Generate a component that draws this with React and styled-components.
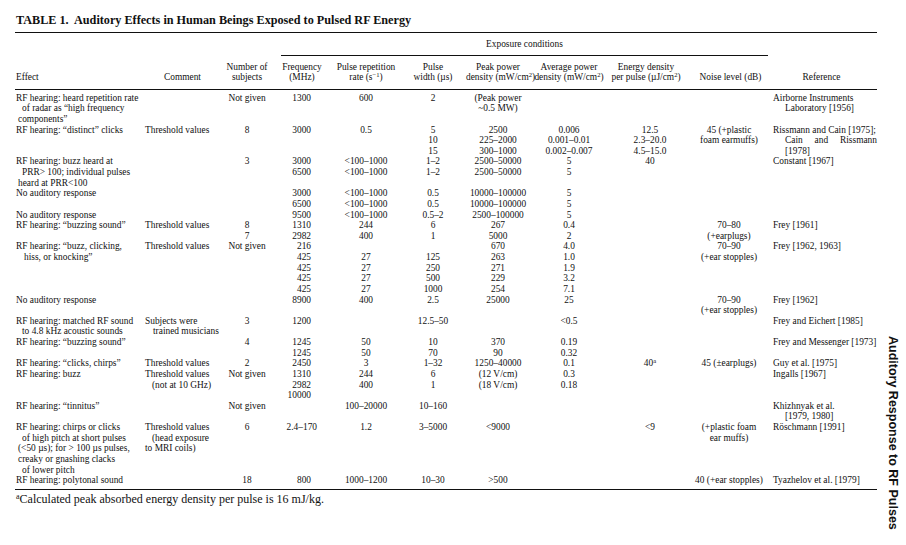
import React from "react";
import styled, { createGlobalStyle } from "styled-components";

const GlobalStyle = createGlobalStyle`
  html, body { margin: 0; padding: 0; background: #fff; }
  body {
    font-family: "Liberation Serif", "Times New Roman", serif;
    color: #111;
  }
`;

const COLS = "128px 79px 50px 60px 68px 66px 64px 78px 84px 74px 111px";

const Page = styled.div`
  display: flex;
  width: 906px;
  height: 545px;
  overflow: hidden;
`;

const Main = styled.div`
  width: 862px;
  flex-shrink: 0;
  padding: 13px 0 0 15px;
`;

const Title = styled.h1`
  margin: 0;
  padding-left: 1px;
  font-size: 12.2px;
  line-height: 14px;
  font-weight: bold;
  white-space: pre;
`;

const Table = styled.div`
  margin-top: 5px;
  border-top: 1px solid #111;
  border-bottom: 1px solid #111;
  font-size: 9.4px;
  line-height: 10.64px;
`;

const Grid = styled.div`
  display: grid;
  grid-template-columns: ${COLS};
`;

const HeadTop = styled(Grid)`
  padding-top: 5.7px;
`;

const SpanHead = styled.div`
  grid-column: 4 / 11;
  margin: 0 -2px 0 9px;
  padding-bottom: 5.7px;
  border-bottom: 1px solid #111;
  text-align: center;
`;

const HeadRow = styled(Grid)`
  padding: 5.7px 0 6px;
  border-bottom: 1px solid #111;
`;

const HeadCell = styled.div`
  align-self: end;
  text-align: ${p => p.$align || "center"};
  padding-left: ${p => p.$pl || 0}px;
  margin-left: ${p => p.$shift || 0}px;
  white-space: nowrap;
`;

const Body = styled(Grid)`
  padding: 2.7px 0 3px;
`;

const Cell = styled.div`
  text-align: ${p => p.$align};
  padding-left: ${p => p.$pl || 0}px;
  padding-right: ${p => p.$pr || 0}px;
  white-space: nowrap;
`;

const Line = styled.div`
  height: 10.64px;
  padding-left: ${p => p.$indent || 0}px;
  margin-right: ${p => p.$nudge || 0}px;
`;

const Spread = styled(Line)`
  display: flex;
  justify-content: space-between;
`;

const Sup = styled.sup`
  font-size: 6.6px;
  line-height: 0;
  vertical-align: 3px;
`;

const Note = styled.p`
  margin: 2px 0 0;
  padding-left: 1px;
  font-size: 12px;
  line-height: 14px;
`;

const NoteMark = styled.sup`
  font-size: 8px;
  line-height: 0;
  vertical-align: 4px;
`;

const Side = styled.div`
  flex: 1;
  display: flex;
  flex-direction: column;
  justify-content: flex-end;
  align-items: center;
  padding: 0 0 15px 3px;
`;

const SideTitle = styled.div`
  writing-mode: vertical-rl;
  font-family: "Liberation Sans", Arial, sans-serif;
  font-weight: bold;
  font-size: 12.5px;
  line-height: 14px;
  color: #111;
`;

const L = (t, i) => ({ t, i });

const columns = [
  { key: "e", align: "left", pl: 1 },
  { key: "c", align: "left", pl: 2 },
  { key: "n", align: "center" },
  { key: "f", align: "right", pr: 21 },
  { key: "r", align: "center" },
  { key: "w", align: "center" },
  { key: "p", align: "center" },
  { key: "a", align: "center" },
  { key: "en", align: "center" },
  { key: "no", align: "center" },
  { key: "ref", align: "left", pl: 7 },
];

const cm2 = <>cm<Sup>2</Sup>)</>;

const headers = [
  { lines: ["Effect"], align: "left", pl: 1 },
  { lines: ["Comment"] },
  { lines: ["Number of", "subjects"] },
  { lines: ["Frequency", "(MHz)"] },
  { lines: ["Pulse repetition", <>rate (s<Sup>−1</Sup>)</>] },
  { lines: ["Pulse", "width (µs)"] },
  { lines: ["Peak power", <>density (mW/{cm2}</>] },
  { lines: ["Average power", <>density (mW/{cm2}</>] },
  { lines: ["Energy density", <>per pulse (µJ/{cm2}</>], shift: -8 },
  { lines: ["Noise level (dB)"], shift: 3 },
  { lines: ["Reference"] },
];

const k5 = "<100–1000";

const rows = [
  {
    e: ["RF hearing: heard repetition rate", L("of radar as “high frequency", 6), L("components”", 2)],
    n: ["Not given"], f: ["1300"], r: ["600"], w: ["2"],
    p: ["(Peak power", "~0.5 MW)"],
    ref: ["Airborne Instruments", L("Laboratory [1956]", 12)],
  },
  {
    e: ["RF hearing: “distinct” clicks"], c: ["Threshold values"], n: ["8"], f: ["3000"], r: ["0.5"],
    w: ["5", "10", "15"], p: ["2500", "225–2000", "300–1000"],
    a: ["0.006", "0.001–0.01", "0.002–0.007"], en: ["12.5", "2.3–20.0", "4.5–15.0"],
    no: ["45 (+plastic", "foam earmuffs)"],
    ref: ["Rissmann and Cain [1975];", { spread: ["Cain", "and", "Rissmann"], i: 12 }, L("[1978]", 12)],
  },
  {
    e: ["RF hearing: buzz heard at", L("PRR> 100; individual pulses", 6), L("heard at PRR<100", 2)],
    n: ["3"], f: ["3000", "6500"], r: [k5, k5], w: ["1–2", "1–2"],
    p: ["2500–50000", "2500–50000"], a: ["5", "5"], en: ["40"], ref: ["Constant [1967]"],
  },
  {
    e: ["No auditory response"], f: ["3000", "6500"], r: [k5, k5], w: ["0.5", "0.5"],
    p: ["10000–100000", "10000–100000"], a: ["5", "5"],
  },
  { e: ["No auditory response"], f: ["9500"], r: [k5], w: ["0.5–2"], p: ["2500–100000"], a: ["5"] },
  {
    e: ["RF hearing: “buzzing sound”"], c: ["Threshold values"], n: ["8", "7"], f: ["1310", "2982"],
    r: ["244", "400"], w: ["6", "1"], p: ["267", "5000"], a: ["0.4", "2"],
    no: ["70–80", "(+earplugs)"], ref: ["Frey [1961]"],
  },
  {
    e: ["RF hearing: “buzz, clicking,", L("hiss, or knocking”", 8)], c: ["Threshold values"], n: ["Not given"],
    f: ["216", "425", "425", "425", "425"], r: ["", "27", "27", "27", "27"],
    w: ["", "125", "250", "500", "1000"], p: ["670", "263", "271", "229", "254"],
    a: ["4.0", "1.0", "1.9", "3.2", "7.1"], no: ["70–90", "(+ear stopples)"], ref: ["Frey [1962, 1963]"],
  },
  {
    e: ["No auditory response"], f: ["8900"], r: ["400"], w: ["2.5"], p: ["25000"], a: ["25"],
    no: ["70–90", "(+ear stopples)"], ref: ["Frey [1962]"],
  },
  {
    e: ["RF hearing: matched RF sound", L("to 4.8 kHz acoustic sounds", 6)],
    c: ["Subjects were", L("trained musicians", 8)], n: ["3"], f: ["1200"], w: ["12.5–50"], a: ["<0.5"],
    ref: ["Frey and Eichert [1985]"],
  },
  {
    e: ["RF hearing: “buzzing sound”"], n: ["4"], f: ["1245", "1245"], r: ["50", "50"], w: ["10", "70"],
    p: ["370", "90"], a: ["0.19", "0.32"], ref: ["Frey and Messenger [1973]"],
  },
  {
    e: ["RF hearing: “clicks, chirps”"], c: ["Threshold values"], n: ["2"], f: ["2450"], r: ["3"],
    w: ["1–32"], p: ["1250–40000"], a: ["0.1"], en: [<>40<Sup>a</Sup></>], no: ["45 (±earplugs)"],
    ref: ["Guy et al. [1975]"],
  },
  {
    e: ["RF hearing: buzz"], c: ["Threshold values", L("(not at 10 GHz)", 7)], n: ["Not given"],
    f: ["1310", "2982", "10000"], r: ["244", "400"], w: ["6", "1"], p: ["(12 V/cm)", "(18 V/cm)"],
    a: ["0.3", "0.18"], ref: ["Ingalls [1967]"],
  },
  {
    e: ["RF hearing: “tinnitus”"], n: ["Not given"], r: ["100–20000"], w: ["10–160"],
    ref: ["Khizhnyak et al.", L("[1979, 1980]", 12)],
  },
  {
    e: [
      "RF hearing: chirps or clicks", L("of high pitch at short pulses", 6), L("(<50 µs); for > 100 µs pulses,", 2),
      L("creaky or gnashing clacks", 2), L("of lower pitch", 6),
    ],
    c: ["Threshold values", L("(head exposure", 7), "to MRI coils)"], n: ["6"],
    f: [{ t: "2.4–170", nudge: -6 }], r: ["1.2"],
    w: ["3–5000"], p: ["<9000"], en: ["<9"], no: ["(+plastic foam", "ear muffs)"], ref: ["Röschmann [1991]"],
  },
  {
    e: ["RF hearing: polytonal sound"], n: ["18"], f: ["800"], r: ["1000–1200"], w: ["10–30"], p: [">500"],
    no: ["40 (+ear stopples)"], ref: ["Tyazhelov et al. [1979]"],
  },
];

const renderLine = (l, k) => {
  if (l == null || typeof l === "string" || React.isValidElement(l)) return <Line key={k}>{l}</Line>;
  if (l.spread)
    return (
      <Spread key={k} $indent={l.i}>
        {l.spread.map(w => <span key={w}>{w}</span>)}
      </Spread>
    );
  return (
    <Line key={k} $indent={l.i} $nudge={l.nudge}>
      {l.t}
    </Line>
  );
};

export default function App() {
  return (
    <>
      <GlobalStyle />
      <Page>
        <Main>
          <Title>{"TABLE 1.  Auditory Effects in Human Beings Exposed to Pulsed RF Energy"}</Title>
          <Table>
            <HeadTop>
              <SpanHead>Exposure conditions</SpanHead>
            </HeadTop>
            <HeadRow>
              {headers.map((h, i) => (
                <HeadCell key={i} $align={h.align} $pl={h.pl} $shift={h.shift}>
                  {h.lines.map((l, j) => <Line key={j}>{l}</Line>)}
                </HeadCell>
              ))}
            </HeadRow>
            <Body>
              {rows.map((row, ri) =>
                columns.map(col => (
                  <Cell key={ri + col.key} $align={col.align} $pl={col.pl} $pr={col.pr}>
                    {(row[col.key] || []).map(renderLine)}
                  </Cell>
                ))
              )}
            </Body>
          </Table>
          <Note>
            <NoteMark>a</NoteMark>Calculated peak absorbed energy density per pulse is 16 mJ/kg.
          </Note>
        </Main>
        <Side>
          <SideTitle>Auditory Response to RF Pulses</SideTitle>
        </Side>
      </Page>
    </>
  );
}
